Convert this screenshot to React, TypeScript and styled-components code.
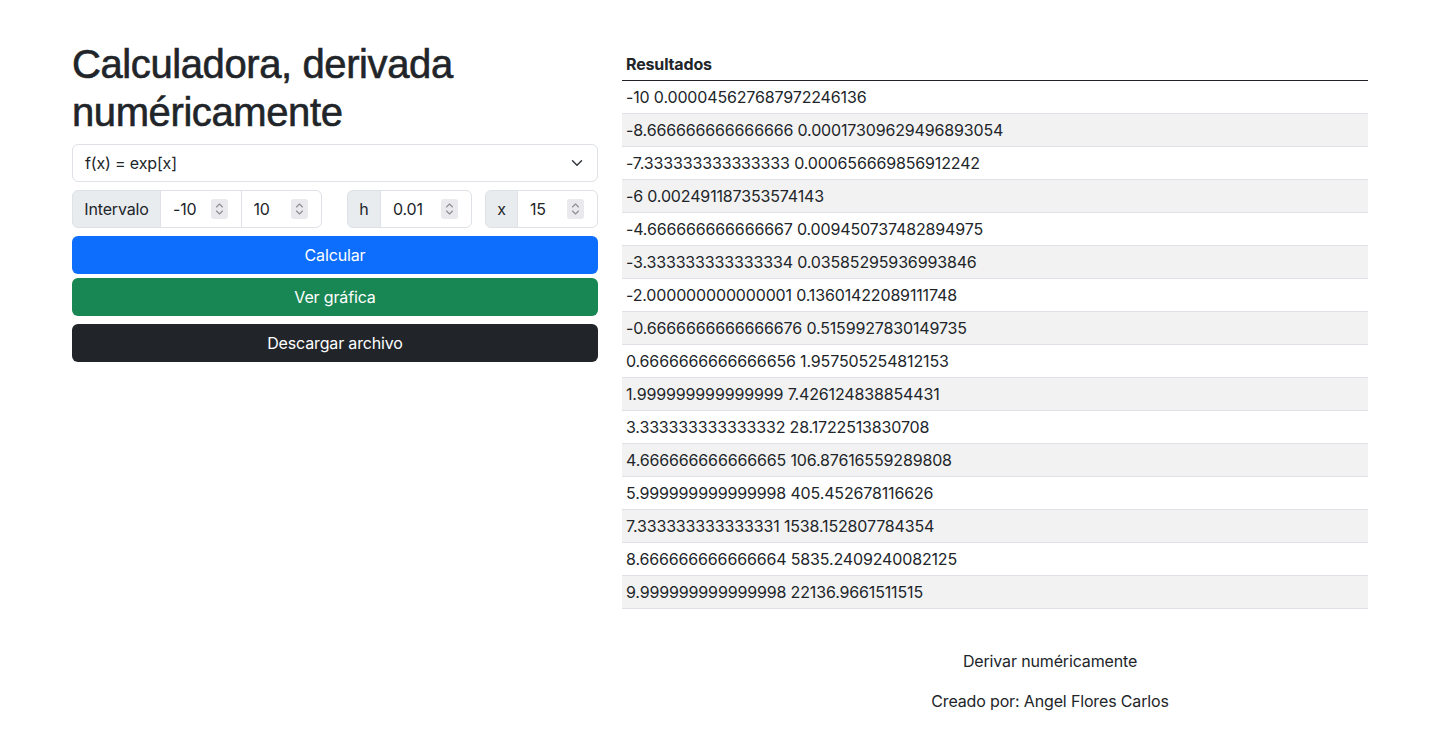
import React from "react";
import styled, { createGlobalStyle } from "styled-components";

const GlobalStyle = createGlobalStyle`
  *, *::before, *::after { box-sizing: border-box; }
  body {
    margin: 0;
    background: #fff;
    color: #212529;
    font-family: Inter, "Liberation Sans", sans-serif;
    font-size: 16px;
    line-height: 1.5;
    letter-spacing: -0.15px;
  }
`;

const Container = styled.div`
  max-width: 1320px;
  margin: 0 auto;
  padding: 40px 12px 0;
`;

const Row = styled.div`
  display: grid;
  grid-template-columns: 526px 746px;
  column-gap: 24px;
  align-items: start;
`;

const LeftCol = styled.div`
  display: flex;
  flex-direction: column;
`;

const Title = styled.h1`
  margin: 0 0 8px;
  font-family: "Liberation Sans", Arial, sans-serif;
  font-size: 40px;
  font-weight: 500;
  line-height: 1.2;
  letter-spacing: -0.4px;
  -webkit-text-stroke: 0.6px #212529;
`;

const SelectBox = styled.div`
  display: flex;
  align-items: center;
  justify-content: space-between;
  height: 38px;
  padding: 6px 14px 6px 12px;
  border: 1px solid #dee2e6;
  border-radius: 6px;
  margin-bottom: 8px;
`;

const InputsRow = styled.div`
  display: flex;
  margin-bottom: 8px;
`;

const Group = styled.div<{ $w: number; $ml?: number }>`
  display: flex;
  width: ${(p) => p.$w}px;
  margin-left: ${(p) => p.$ml ?? 0}px;
  height: 38px;
`;

const Addon = styled.span<{ $w: number }>`
  display: flex;
  align-items: center;
  justify-content: center;
  width: ${(p) => p.$w}px;
  flex: none;
  background: #e9ecef;
  border: 1px solid #dee2e6;
  border-radius: 6px 0 0 6px;
`;

const NumField = styled.span<{ $last?: boolean }>`
  display: flex;
  align-items: center;
  justify-content: space-between;
  flex: 1;
  min-width: 0;
  padding: 0 13px 0 12px;
  border: 1px solid #dee2e6;
  margin-left: -1px;
  border-radius: ${(p) => (p.$last ? "0 6px 6px 0" : "0")};
`;

const Spinner = styled.span`
  display: flex;
  align-items: center;
  justify-content: center;
  width: 17px;
  height: 20px;
  background: #e9e9ee;
  border-radius: 3px;
`;

const Button = styled.div<{ $bg: string; $mb: number }>`
  display: flex;
  align-items: center;
  justify-content: center;
  height: 38px;
  background: ${(p) => p.$bg};
  color: #fff;
  border-radius: 6px;
  margin-bottom: ${(p) => p.$mb}px;
`;

const Table = styled.table`
  width: 100%;
  margin-top: 8px;
  margin-bottom: 16px;
  border-collapse: collapse;
`;

const Th = styled.th`
  text-align: left;
  font-weight: 700;
  padding: 4px;
  border-bottom: 1px solid #212529;
`;

const Td = styled.td<{ $striped: boolean }>`
  padding: 4px;
  border-bottom: 1px solid #dee2e6;
  background: ${(p) => (p.$striped ? "#f2f2f2" : "#fff")};
`;

const Footer = styled.footer`
  padding: 24px 0 0 660px;
  text-align: center;
`;

const FooterText = styled.p`
  margin: 0 0 16px;
`;

const rows = [
  "-10 0.000045627687972246136",
  "-8.666666666666666 0.00017309629496893054",
  "-7.333333333333333 0.000656669856912242",
  "-6 0.002491187353574143",
  "-4.666666666666667 0.009450737482894975",
  "-3.333333333333334 0.03585295936993846",
  "-2.000000000000001 0.13601422089111748",
  "-0.6666666666666676 0.5159927830149735",
  "0.6666666666666656 1.957505254812153",
  "1.999999999999999 7.426124838854431",
  "3.333333333333332 28.1722513830708",
  "4.666666666666665 106.87616559289808",
  "5.999999999999998 405.452678116626",
  "7.333333333333331 1538.152807784354",
  "8.666666666666664 5835.2409240082125",
  "9.999999999999998 22136.9661511515",
];

const SpinIcon = () => (
  <Spinner>
    <svg width="9" height="14" viewBox="0 0 9 14" fill="none" stroke="#8e8e93" strokeWidth="1.1" strokeLinecap="round" strokeLinejoin="round">
      <path d="M1.5 5 L4.5 2 L7.5 5" />
      <path d="M1.5 9 L4.5 12 L7.5 9" />
    </svg>
  </Spinner>
);

const Chevron = () => (
  <svg width="12" height="12" viewBox="0 0 16 16" fill="none" stroke="#343a40" strokeWidth="2" strokeLinecap="round" strokeLinejoin="round">
    <path d="m2 5 6 6 6-6" />
  </svg>
);

export default function App() {
  return (
    <>
      <GlobalStyle />
      <Container>
        <Row>
          <LeftCol>
            <Title>Calculadora, derivada numéricamente</Title>
            <SelectBox>
              <span>f(x) = exp[x]</span>
              <Chevron />
            </SelectBox>
            <InputsRow>
              <Group $w={250}>
                <Addon $w={89}>Intervalo</Addon>
                <NumField>
                  -10
                  <SpinIcon />
                </NumField>
                <NumField $last>
                  10
                  <SpinIcon />
                </NumField>
              </Group>
              <Group $w={125} $ml={25}>
                <Addon $w={34}>h</Addon>
                <NumField $last>
                  0.01
                  <SpinIcon />
                </NumField>
              </Group>
              <Group $w={113} $ml={13}>
                <Addon $w={33}>x</Addon>
                <NumField $last>
                  15
                  <SpinIcon />
                </NumField>
              </Group>
            </InputsRow>
            <Button $bg="#0d6efd" $mb={4}>Calcular</Button>
            <Button $bg="#198754" $mb={8}>Ver gráfica</Button>
            <Button $bg="#212529" $mb={0}>Descargar archivo</Button>
          </LeftCol>
          <Table>
            <thead>
              <tr>
                <Th>Resultados</Th>
              </tr>
            </thead>
            <tbody>
              {rows.map((r, i) => (
                <tr key={r}>
                  <Td $striped={i % 2 === 1}>{r}</Td>
                </tr>
              ))}
            </tbody>
          </Table>
        </Row>
        <Footer>
          <FooterText>Derivar numéricamente</FooterText>
          <FooterText>Creado por: Angel Flores Carlos</FooterText>
        </Footer>
      </Container>
    </>
  );
}
